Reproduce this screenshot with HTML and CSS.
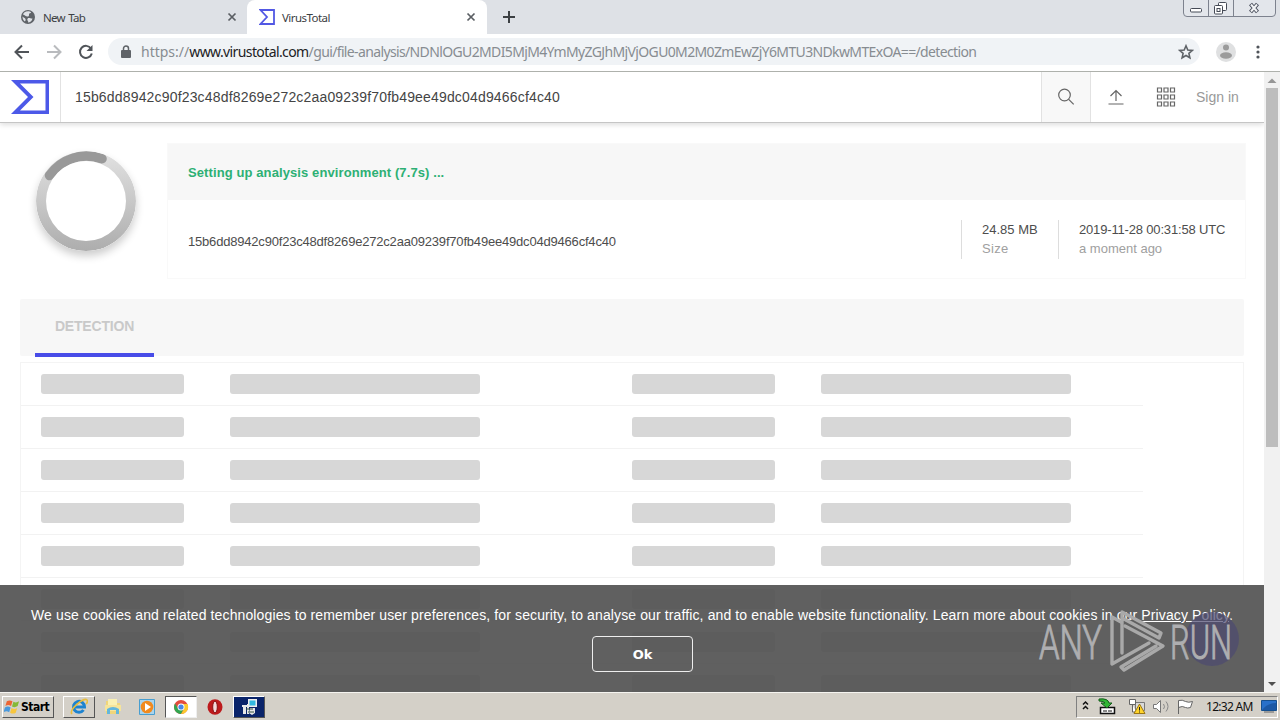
FILE: index.html
```
<!DOCTYPE html>
<html lang="en">
<head>
<meta charset="utf-8">
<title>VirusTotal</title>
<link rel="stylesheet" href="styles.css">
</head>
<body>
<div class="desktop">
  <header class="tabstrip">
    <div class="tab">
      <svg class="tab-icon" width="16" height="16" viewBox="0 0 16 16"><circle cx="8" cy="8" r="7" fill="#5f6368"/><path d="M3 5.500C5 6 6 8 8 7.500S8 4.500 10 4.200 11 2.500 9 2.200C5.500 1.800 3.500 3.500 3 5.500ZM8 9c2-.5 3 1 4.500.5C12 12 10 13.500 8 13.500c1-1.500-1.500-2-.5-3.500ZM2.500 7.500c1 1.500 2.500 1 3 2.500S5 12 5 12.500C3.500 11.500 2.500 10 2.500 7.500Z" fill="#dee1e6"/></svg>
      <span class="tab-title t-new">New Tab</span>
      <svg class="tab-close" width="10" height="10" viewBox="0 0 10 10"><path d="M1.500 1.500l7 7M8.500 1.500l-7 7" stroke="#5a5e63" stroke-width="1.700"/></svg>
    </div>
    <div class="tab active">
      <svg class="tab-icon" width="16" height="16" viewBox="0 0 16 16"><path d="M1.500 1H15v14H1.500L8 8Z" fill="none" stroke="#5258e4" stroke-width="1.800"/></svg>
      <span class="tab-title t-vt">VirusTotal</span>
      <svg class="tab-close" width="10" height="10" viewBox="0 0 10 10"><path d="M1.500 1.500l7 7M8.500 1.500l-7 7" stroke="#5a5e63" stroke-width="1.700"/></svg>
    </div>
    <svg class="plus" width="14" height="14" viewBox="0 0 14 14"><path d="M7 1v12M1 7h12" stroke="#3c4043" stroke-width="2"/></svg>
    <svg class="window-buttons" width="94" height="18" viewBox="0 0 94 18"><path d="M.5 0v13q0 3.500 3.500 3.500h85q3.500 0 3.500-3.500V0M25.500 0v16M50.500 0v16" fill="#e3e6eb" stroke="#7d828e"/><g fill="#fff" stroke="#454a56"><rect x="7.500" y="8.500" width="11" height="3.500" rx="1"/><rect x="35.500" y="2.500" width="8" height="8" rx="1"/><rect x="31.500" y="5.500" width="8" height="8.500" rx="1"/><rect x="34" y="8.500" width="3" height="3"/></g><path d="M67.500 4l7 8M74.500 4l-7 8" stroke="#4b505d" stroke-width="4"/><path d="M68 4.500l6 7M74 4.500l-6 7" stroke="#f2f3f5" stroke-width="2"/></svg>
  </header>

  <div class="toolbar">
    <svg class="nav-icons" width="104" height="34" viewBox="0 0 104 34" fill="none" stroke="#505459" stroke-width="2"><path d="M29 17H16M22 10.500L15.500 17l6.500 6.500"/><path d="M47 17h13M54 10.500l6.500 6.500-6.500 6.500" stroke="#b9bbbe"/><path d="M91 13.500a6 6 0 1 0 .8 5"/><path d="M92.500 10v6h-6z" fill="#505459" stroke="none"/></svg>
    <div class="omnibox">
      <svg width="10" height="14" viewBox="0 0 10 14"><rect y="5" width="10" height="8" rx="1" fill="#5f6368"/><path d="M2.500 5.500V3.500a2.500 2.500 0 0 1 5 0v2" fill="none" stroke="#5f6368" stroke-width="1.500"/></svg>
      <span class="url"><span class="u1">https://</span><span class="host">www.virustotal.com</span><span class="u2">/gui/file-analysis/NDNlOGU2MDI5MjM4YmMyZGJhMjVjOGU0M2M0ZmEwZjY6MTU3NDkwMTExOA==/detection</span></span>
      <svg class="star" width="16" height="16" viewBox="0 0 16 16"><path d="M8 1.800l1.800 4.200 4.500.4-3.400 3 1 4.400L8 11.500l-3.900 2.300 1-4.400-3.400-3L6.200 6Z" fill="none" stroke="#5f6368" stroke-width="1.600"/></svg>
    </div>
    <svg class="avatar" width="20" height="20" viewBox="0 0 20 20"><circle cx="10" cy="10" r="10" fill="#dfe0e1"/><circle cx="10" cy="5.500" r="3" fill="#9b9b9b"/><ellipse cx="10" cy="13.500" rx="6" ry="3.200" fill="#9b9b9b"/></svg>
    <svg class="kebab" width="4" height="14" viewBox="0 0 4 14" fill="#50545a"><circle cx="2" cy="2" r="1.600"/><circle cx="2" cy="7" r="1.600"/><circle cx="2" cy="12" r="1.600"/></svg>
  </div>

  <div class="viewport">
    <main class="page">
      <nav class="vt-bar">
        <div class="logo"><svg width="40" height="36" viewBox="0 0 40 36"><path fill="#4c59e8" fill-rule="evenodd" d="M0 1h38v34H0l17-17ZM9 4.500l13.500 13.500L9 31.500h25.500v-27Z"/></svg></div>
        <div class="query">15b6dd8942c90f23c48df8269e272c2aa09239f70fb49ee49dc04d9466cf4c40</div>
        <div class="search"><svg width="18" height="18" viewBox="0 0 18 18" fill="none" stroke="#666" stroke-width="1.200"><circle cx="7.500" cy="7" r="5.800"/><path d="M11.700 11.300l5 5"/></svg></div>
        <svg class="upload" width="16" height="16" viewBox="0 0 16 16" fill="none" stroke="#666" stroke-width="1.200"><path d="M8 12V1.500M2.500 7L8 1.500 13.500 7M.5 15h15"/></svg>
        <svg class="apps" width="20" height="20" viewBox="0 0 20 20" fill="none" stroke="#666" stroke-width="1.200"><path d="M1.500 1h4v4h-4zM8 1h4v4H8zM14.500 1h4v4h-4zM1.500 8h4v4h-4zM8 8h4v4H8zM14.500 8h4v4h-4zM1.500 15h4v4h-4zM8 15h4v4H8zM14.500 15h4v4h-4z"/></svg>
        <span class="signin">Sign in</span>
      </nav>

      <section class="summary">
        <div class="gauge"><svg width="100" height="100" viewBox="0 0 100 100"><defs><linearGradient id="ring" x1="0" y1="0" x2="0" y2="1"><stop offset="0" stop-color="#e2e2e2"/><stop offset=".5" stop-color="#c8c8c8"/><stop offset="1" stop-color="#adadad"/></linearGradient></defs><circle cx="50" cy="50" r="50" fill="url(#ring)"/><path d="M13.500 24.500A44.900 44.900 0 0 1 66 7.800" fill="none" stroke="#999" stroke-width="9.500" stroke-linecap="round"/><circle cx="50" cy="50" r="40" fill="#fff"/></svg></div>
        <div class="card">
          <div class="status">Setting up analysis environment (7.7s) ...</div>
          <div class="details">
            <div class="hash">15b6dd8942c90f23c48df8269e272c2aa09239f70fb49ee49dc04d9466cf4c40</div>
            <div class="fact size"><span class="size-value">24.85 MB</span><span class="label size-label">Size</span></div>
            <div class="fact date"><span class="date-value">2019-11-28 00:31:58 UTC</span><span class="label ago">a moment ago</span></div>
          </div>
        </div>
      </section>

      <div class="tabs"><div class="detection"><span>DETECTION</span></div></div>
      <div class="results">
        <div class="row"><i></i><b></b><i></i><b></b></div>
        <div class="row"><i></i><b></b><i></i><b></b></div>
        <div class="row"><i></i><b></b><i></i><b></b></div>
        <div class="row"><i></i><b></b><i></i><b></b></div>
        <div class="row"><i></i><b></b><i></i><b></b></div>
        <div class="row"><i></i><b></b><i></i><b></b></div>
        <div class="row"><i></i><b></b><i></i><b></b></div>
        <div class="row"><i></i><b></b><i></i><b></b></div>
      </div>

      <div class="cookies">
        <p><span class="notice">We use cookies and related technologies to remember user preferences, for security, to analyse our traffic, and to enable website functionality. Learn more about cookies in our <u>Privacy Policy</u>.</span></p>
        <button>Ok</button>
      </div>
      <svg class="watermark" width="204" height="66" viewBox="0 0 204 66">
        <circle cx="175" cy="30" r="27" fill="#4d4a70" opacity=".7"/>
        <g fill="#aeaeb0" stroke="#aeaeb0" stroke-width="1"><text x="2" y="50" textLength="63" lengthAdjust="spacingAndGlyphs">ANY</text><text x="133" y="50" textLength="62" lengthAdjust="spacingAndGlyphs">RUN</text></g>
        <g fill="none" stroke="#a9a9a9" stroke-width="3.400" stroke-linejoin="round" stroke-linecap="round"><path d="M112 34L75 55V8l9 5"/><path d="M85 44V3l39 21-2 5-35-19"/><path d="M88 17l38 20-39 24-3-3 35-21"/></g>
      </svg>
    </main>
    <aside class="scrollbar"><svg width="16" height="16" viewBox="0 0 16 16"><path d="M3.500 10L8 5.500l4.500 4.500z" fill="#969696"/></svg><div class="thumb"></div><svg class="down" width="16" height="16" viewBox="0 0 16 16"><path d="M4 6h8l-4 4z" fill="#505050"/></svg></aside>
  </div>

  <footer class="taskbar">
    <div class="start"><svg width="16" height="16" viewBox="0 0 17 16"><path d="M3 2q3-2 6 0L7.500 7q-3-2-6 0z" fill="#ed6533"/><path d="M10 2.500q3 1.500 6-.5L14.500 7q-3 2-6 .5z" fill="#85b936"/><path d="M1 8.500q3-2 6 0l-1.500 5q-3-2-6 0z" fill="#4a99dc"/><path d="M8 9q3 2 6 0l-1.500 5q-3 2-6 0z" fill="#f8c63d"/></svg><span>Start</span></div>
    <div class="task raised ie"><svg width="18" height="18" viewBox="0 0 18 18"><path d="M13.500 12A5.500 5.500 0 1 1 14.500 9H5" fill="none" stroke="#1d83cf" stroke-width="3"/><path d="M2 16C-2 12 14-1 17 2c1 1 0 3-1 4" fill="none" stroke="#e8bd3d" stroke-width="1.600"/></svg></div>
    <div class="task folder"><svg width="18" height="18" viewBox="0 0 18 18"><path d="M2 3h5l1 2h8v11H2z" fill="#f0d57a"/><path d="M4 1h9v6H4z" fill="#faf0b2"/><path d="M1 7h16v6H1z" fill="#f6e49a"/><path d="M3 16v-5q6-4 12 0v5h-3v-4H6v4z" fill="#63b6dc"/></svg></div>
    <div class="task media"><svg width="18" height="18" viewBox="0 0 18 18"><path d="M1.500 1.500h15v15h-15z" fill="#a9d4ed" stroke="#489ed0"/><circle cx="9" cy="9" r="6.300" fill="#f18a1e"/><path d="M7 5l6 4-6 4z" fill="#fff"/></svg></div>
    <div class="task pressed"><svg width="16" height="16" viewBox="0 0 16 16"><circle cx="8" cy="8" r="7" fill="#e34c3d"/><path d="M2 4.500A7 7 0 0 0 8 15l3-5.500H5z" fill="#31a650"/><path d="M8 15A7 7 0 0 0 14.500 5H8l3 5z" fill="#fbc92e"/><circle cx="8" cy="8" r="3.500" fill="#fff"/><circle cx="8" cy="8" r="2.600" fill="#4787e8"/></svg></div>
    <div class="task opera"><svg width="16" height="18" viewBox="0 0 16 18"><ellipse cx="8" cy="9" rx="7.500" ry="7.800" fill="#bd1a1c"/><ellipse cx="8" cy="9" rx="2.300" ry="5.800" fill="#f4dada" stroke="#851215"/></svg></div>
    <div class="task raised navy"><svg width="18" height="18" viewBox="0 0 18 18"><path d="M8 1h9v8H8z" fill="#eee"/><path d="M9.500 2.500h6v5h-6z" fill="#31b8de"/><path d="M2 7h5v2H2zM3 9h3v7H3zM7 6h2v10H7zM10 10h5v5l-3 2-3-2z" fill="#e8e8e8"/><path d="M6 11h7M8 14h6" stroke="#34513e"/></svg></div>
    <div class="tray">
      <svg width="143" height="20" viewBox="0 0 143 20"><path d="M6 7.500l2.500-2.500L11 7.500M6 12l2.500-2.500L11 12" fill="none" stroke="#111" stroke-width="1.500"/><path d="M23.500 10.500h14v6h-14z" fill="#fff" stroke="#111" stroke-width="1.500"/><path d="M26 14h4M31 14h4" stroke="#111"/><path d="M22 2q9-1 10 4h3l-5 5-6-5h4q-1-2-6-2z" fill="#31b535" stroke="#145d1b"/><path d="M58.500 5.500h9v8h-9z" fill="#d9d9d9" stroke="#777"/><path d="M52.500 2.500h6v5h-6zM55.500 8v7h4" fill="#fff" stroke="#666"/><path d="M62.500 7l5.500 9.500h-11z" fill="#ffd42b" stroke="#9b7614"/><path d="M62.500 10v3.500M62.500 14.500v1" stroke="#222"/><path d="M76.500 7.500h3l4-4v12l-4-4h-3z" fill="#fff" stroke="#777"/><path d="M86.500 7q2 3 0 5M89 4.500q4 5 0 10" fill="none" stroke="#888"/><path d="M101.500 17V3.500q4-1 7 1 3 1.500 7 0l-2 6q-3 1-5 0-3-2-7 0" fill="#fff" stroke="#666"/></svg>
      <span>12:32 AM</span>
      <svg class="show-desktop" width="16" height="15" viewBox="0 0 16 15"><path d="M.5 1.500h15v10H.5z" fill="#2870c9" stroke="#16508e"/><path d="M1 11Q6 4 15 4v7z" fill="#1b58a5"/><path d="M3 13h10" stroke="#888" stroke-width="1.500"/></svg>
    </div>
  </footer>
</div>
</body>
</html>
```
FILE: styles.css
```
* { box-sizing: border-box; }
body { margin: 0; font-family: "Liberation Sans", Arial, sans-serif; }
svg { display: block; flex: none; }
.desktop { width: 1280px; height: 720px; overflow: hidden; display: flex; flex-direction: column; background: #fff; }
.tabstrip { height: 34px; flex: none; background: #dee1e6; display: flex; align-items: center; }
.tab { width: 247px; height: 34px; padding: 0 10px 0 20px; display: flex; align-items: center; font: 11.5px "Noto Sans", sans-serif; color: #3c4043; }
.tab.active { width: 240px; padding: 0 11px 0 12px; background: #fff; border-radius: 8px 8px 0 0; }
.tab-title { margin-left: 7px; flex: 1; white-space: nowrap; }
.t-new { letter-spacing: -.7px; }
.t-new { letter-spacing: -.7px; word-spacing: 1px; }
.t-vt { letter-spacing: -.55px; }
.plus { margin-left: 15px; }
.window-buttons { margin-left: auto; margin-right: 3px; align-self: flex-start; }
.toolbar { height: 38px; flex: none; display: flex; align-items: center; padding: 0 20px 2px 0; border-bottom: 1px solid #aeb1ac; }
.omnibox { width: 1092px; height: 27px; margin-left: 4px; padding: 0 6px 0 13px; border-radius: 14px; background: #f0f3f6; display: flex; align-items: center; }
.url { flex: 1; margin-left: 10px; font: 14px "Noto Sans", sans-serif; color: #878c91; white-space: nowrap; }
.host { color: #202124; letter-spacing: -.6px; }
.u2 { letter-spacing: -.635px; }
.avatar { margin-left: 16px; }
.kebab { margin-left: auto; }
.viewport { height: 620px; flex: none; display: flex; }
.page { position: relative; width: 1264px; height: 620px; overflow: hidden; background: #fff; }
.vt-bar { height: 51px; display: flex; align-items: center; border-bottom: 1px solid #c5c5c5; box-shadow: 0 2px 5px rgba(0,0,0,.13); }
.logo { width: 61px; height: 50px; padding-left: 11px; display: flex; align-items: center; border-right: 1px solid #e2e2e2; }
.query { width: 980px; padding-left: 14px; font-size: 14px; letter-spacing: .17px; color: #444; white-space: nowrap; }
.search { width: 50px; height: 50px; display: flex; align-items: center; justify-content: center; border: solid #e2e2e2; border-width: 0 1px; background: #f8f8f8; }
.upload { margin-left: 17px; }
.apps { margin-left: 32px; }
.signin { margin-left: 20px; font-size: 14px; color: #999; white-space: nowrap; }
.summary { height: 136px; margin: 20px 18px 20px 36px; display: flex; }
.gauge { width: 131px; padding-top: 8px; }
.gauge svg { border-radius: 50%; box-shadow: 0 5px 9px rgba(0,0,0,.2); }
.card { flex: 1; border: 1px solid #f9f9f9; }
.status { height: 56px; padding-left: 20px; background: #f7f7f7; font-size: 13px; letter-spacing: .1px; line-height: 58px; font-weight: 700; color: #2db074; }
.details { height: 78px; padding-right: 20px; display: flex; align-items: center; font-size: 13px; color: #4d4d4d; white-space: nowrap; }
.hash { flex: 1; padding: 5px 0 0 20px; letter-spacing: -.195px; }
.fact { height: 39px; display: flex; flex-direction: column; border-left: 1px solid #ddd; padding-left: 20px; line-height: 19px; }
.size { width: 97px; }
.date { width: 167px; }
.date-value { letter-spacing: -.17px; }
.label { color: #a0a0a0; }
.size-label { letter-spacing: .3px; }
.tabs { height: 57px; margin: 0 20px 6px; padding-left: 15px; background: #f7f7f7; border-radius: 2px; }
.detection { width: 119px; height: 58px; text-align: center; border-bottom: 4px solid #484ce8; line-height: 55px; font-size: 14px; font-weight: 700; letter-spacing: -.2px; color: #c9c9c9; }
.results { margin: 0 20px; height: 345px; border: 1px solid #f4f4f4; }
.row { width: 1122px; height: 43px; padding-left: 20px; display: grid; grid-template-columns: 189px 402px 189px 250px; align-items: center; border-bottom: 1px solid #f2f2f2; }
.row i { width: 143px; height: 20px; border-radius: 3px; background: #d7d7d7; }
.row b { width: 250px; height: 20px; border-radius: 3px; background: #d7d7d7; }
.cookies { position: absolute; left: 0; right: 0; bottom: 0; height: 107px; padding: 22px 0 0 31px; background: rgba(82,82,82,.92); color: #fff; }
.cookies p { margin: 0 0 12px; font-size: 14px; line-height: 17px; letter-spacing: .119px; white-space: nowrap; }
.cookies button { display: block; width: 101px; height: 36px; margin-left: 561px; padding: 0; border: 1px solid #eee; border-radius: 4px; background: transparent; color: #fff; font: bold 13px "DejaVu Sans", sans-serif; }
.watermark { position: absolute; left: 1037px; top: 537px; overflow: visible; font: 300 48px "Roboto", sans-serif; }
.scrollbar { width: 16px; height: 620px; background: #f1f1f1; display: flex; flex-direction: column; padding-top: 1px; }
.thumb { width: 12px; height: 359px; margin: -1px 0 0 2px; background: #bdbdbd; }
.down { margin-top: auto; }
.taskbar { height: 28px; flex: none; display: flex; align-items: center; padding: 2px; background: #d4d0c8; border-top: 1px solid #f5f4f0; }
.start { width: 52px; height: 22px; display: flex; align-items: center; gap: 1px; padding-left: 1px; border: 1px solid; border-color: #fff #555 #555 #fff; font: bold 12px "DejaVu Sans Condensed", "DejaVu Sans", sans-serif; letter-spacing: -.5px; color: #000; }
.task { width: 32px; height: 22px; display: flex; align-items: center; justify-content: center; border: 1px solid transparent; }
.raised { border-color: #fff #555 #555 #fff; }
.ie { margin-left: 9px; }
.folder, .media { margin-left: 2px; }
.pressed { margin-left: 2px; background: #fff; border-color: #555 #eee #eee #555; }
.opera { margin-left: 2px; }
.navy { margin-left: 2px; background: #0a246a; }
.tray { width: 202px; height: 22px; margin-left: auto; display: flex; align-items: center; border: 1px solid; border-color: #808080 #fff #fff #808080; font: 12px "Noto Sans", sans-serif; letter-spacing: -.7px; color: #111; white-space: nowrap; }
.tray > span { margin-left: -14px; }
.show-desktop { margin-left: auto; }
```
